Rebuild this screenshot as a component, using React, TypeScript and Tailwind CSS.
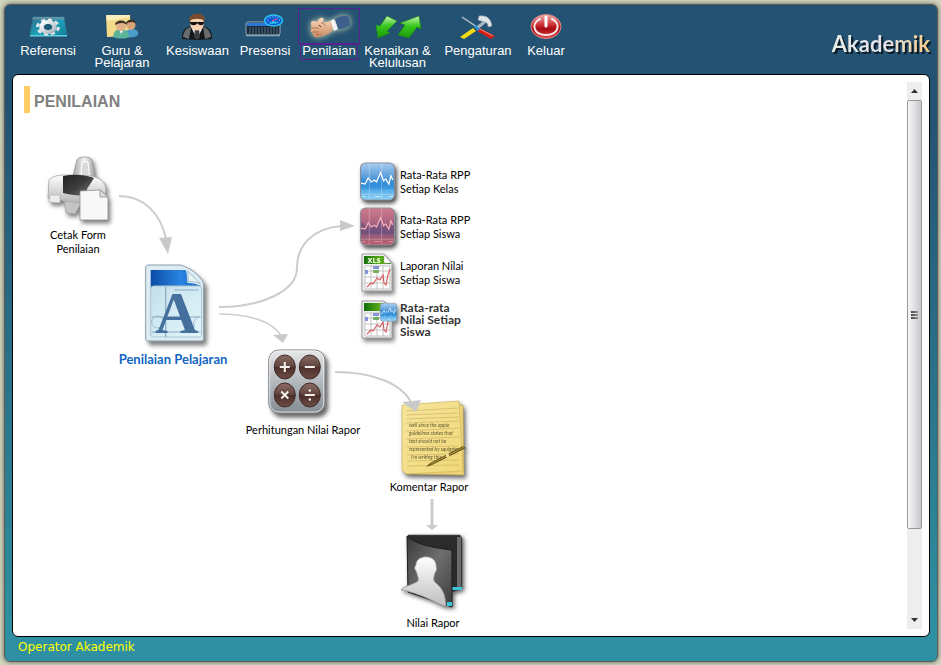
import type { ReactNode } from "react";

const labelFont = "font-['Lato','Open_Sans',sans-serif]";

function Defs() {
  return (
    <svg width="0" height="0" className="absolute" aria-hidden="true">
      <defs>
        <linearGradient id="teal" x1="0" y1="0" x2="1" y2="1">
          <stop offset="0" stopColor="#2f6d8c" />
          <stop offset="0.55" stopColor="#1f9fb8" />
          <stop offset="1" stopColor="#147d98" />
        </linearGradient>
        <linearGradient id="gear" x1="0" y1="0" x2="1" y2="1">
          <stop offset="0" stopColor="#ffffff" />
          <stop offset="1" stopColor="#a9b4ba" />
        </linearGradient>
        <linearGradient id="greenArrow" x1="0" y1="0" x2="0" y2="1">
          <stop offset="0" stopColor="#c8f5b4" />
          <stop offset="0.45" stopColor="#37c81c" />
          <stop offset="1" stopColor="#1c9a0c" />
        </linearGradient>
        <linearGradient id="power" x1="0" y1="0" x2="0" y2="1">
          <stop offset="0" stopColor="#f3b0b0" />
          <stop offset="0.45" stopColor="#c92a2e" />
          <stop offset="0.6" stopColor="#a50a10" />
          <stop offset="1" stopColor="#e84a4a" />
        </linearGradient>
        <linearGradient id="silver" x1="0" y1="0" x2="0" y2="1">
          <stop offset="0" stopColor="#ffffff" />
          <stop offset="1" stopColor="#b9b9b9" />
        </linearGradient>
        <linearGradient id="tray" x1="0" y1="0" x2="1" y2="0">
          <stop offset="0" stopColor="#a8a8a8" />
          <stop offset="0.5" stopColor="#f2f2f2" />
          <stop offset="1" stopColor="#9a9a9a" />
        </linearGradient>
        <linearGradient id="darkGlass" x1="0" y1="0" x2="1" y2="1">
          <stop offset="0" stopColor="#222222" />
          <stop offset="0.5" stopColor="#3c3c3c" />
          <stop offset="1" stopColor="#777777" />
        </linearGradient>
        <linearGradient id="docBlue" x1="0" y1="0" x2="1" y2="0">
          <stop offset="0" stopColor="#0c4ba6" />
          <stop offset="0.6" stopColor="#2a86e2" />
          <stop offset="1" stopColor="#1560bd" />
        </linearGradient>
        <linearGradient id="docGlass" x1="0" y1="0" x2="1" y2="1">
          <stop offset="0" stopColor="#c4dfeb" />
          <stop offset="1" stopColor="#e2f6fb" />
        </linearGradient>
        <linearGradient id="chartBlue" x1="0" y1="0" x2="0" y2="1">
          <stop offset="0" stopColor="#a9cdef" />
          <stop offset="0.42" stopColor="#4f97d8" />
          <stop offset="0.6" stopColor="#3b9be2" />
          <stop offset="1" stopColor="#8ed2f8" />
        </linearGradient>
        <linearGradient id="chartPink" x1="0" y1="0" x2="0" y2="1">
          <stop offset="0" stopColor="#d07c8c" />
          <stop offset="0.45" stopColor="#a5607f" />
          <stop offset="0.65" stopColor="#85587f" />
          <stop offset="1" stopColor="#c0616f" />
        </linearGradient>
        <linearGradient id="xlsGreen" x1="0" y1="0" x2="1" y2="0">
          <stop offset="0" stopColor="#0f6e0a" />
          <stop offset="0.6" stopColor="#5fae16" />
          <stop offset="1" stopColor="#2f8612" />
        </linearGradient>
        <linearGradient id="calcBody" x1="0" y1="0" x2="0" y2="1">
          <stop offset="0" stopColor="#e6e7e9" />
          <stop offset="0.5" stopColor="#b4b9bd" />
          <stop offset="1" stopColor="#858c92" />
        </linearGradient>
        <linearGradient id="calcKey" x1="0" y1="0" x2="0" y2="1">
          <stop offset="0" stopColor="#8c6c65" />
          <stop offset="0.48" stopColor="#60443e" />
          <stop offset="0.52" stopColor="#4b302b" />
          <stop offset="1" stopColor="#6f4c44" />
        </linearGradient>
        <linearGradient id="paper" x1="0" y1="0" x2="1" y2="1">
          <stop offset="0" stopColor="#f6e59b" />
          <stop offset="1" stopColor="#f0d878" />
        </linearGradient>
        <linearGradient id="folder" x1="0" y1="0" x2="1" y2="1">
          <stop offset="0" stopColor="#3a3a3a" />
          <stop offset="0.5" stopColor="#6e6e6e" />
          <stop offset="1" stopColor="#3c3c3c" />
        </linearGradient>
        <linearGradient id="person" x1="0" y1="0" x2="0" y2="1">
          <stop offset="0" stopColor="#ffffff" />
          <stop offset="1" stopColor="#bdbdbd" />
        </linearGradient>
        <linearGradient id="skin" x1="0" y1="0" x2="0" y2="1">
          <stop offset="0" stopColor="#fbd9bd" />
          <stop offset="1" stopColor="#c98a62" />
        </linearGradient>
      </defs>
    </svg>
  );
}

/* ---------- toolbar icons, all on a 60 x 34 grid ---------- */

function ToolSvg({ children }: { children: ReactNode }) {
  return (
    <svg width="60" height="34" viewBox="0 0 60 34" aria-hidden="true">
      {children}
    </svg>
  );
}

function GearIcon() {
  return (
    <ToolSvg>
      <path d="M15 8h31l3 19H12z" fill="url(#teal)" stroke="#2f7f9b" strokeWidth="0.6" />
      <path d="M15 8h31l.5 2.500H14.500z" fill="#7d99a8" opacity="0.7" />
      <path d="M12 26h37v1.500H12z" fill="#5ed0df" />
      <ellipse cx="30" cy="18" rx="10.500" ry="7" fill="none" stroke="#dfe5e8" strokeWidth="3" strokeDasharray="3.900 3" />
      <ellipse cx="30" cy="18" rx="6.500" ry="4.800" fill="none" stroke="url(#gear)" strokeWidth="4.500" />
      <ellipse cx="30" cy="18" rx="4" ry="3" fill="#1b5a75" />
    </ToolSvg>
  );
}

function TeacherIcon() {
  return (
    <ToolSvg>
      <path d="M14 6h24l1 21-24 1z" fill="#f2dc8b" />
      <path d="M14 6h24v2L15 12z" fill="#fbeebb" />
      <path d="M32 28c0-6 4-8 8-8s7 2 6 6c-2 2-6 3-14 2z" fill="#4a9ccb" />
      <ellipse cx="39" cy="16" rx="4.500" ry="5" fill="#d9a377" />
      <path d="M34 15c0-5 10-6 10 0-3-3-7-2-10 0z" fill="#3d2f28" />
      <path d="M21 28c1-7 4-8 8-8 5 0 8 3 8 8-4 2-12 2-16 0z" fill="#5cb59a" />
      <path d="M27 20l2 5 3-5z" fill="#f5f5f5" />
      <ellipse cx="29" cy="17" rx="5" ry="5" fill="#e2b088" />
      <path d="M23 16c0-6 12-6 12 0-4-3-8-2-12 0z" fill="#3c302a" />
    </ToolSvg>
  );
}

function AgentIcon() {
  return (
    <ToolSvg>
      <path d="M14 30c0-11 5-13 15-13s15 2 15 13c-9 1-21 1-30 0z" fill="#151719" />
      <path d="M15 28c1-7 4-9 8-10l-2 12zM43 28c-1-7-4-9-8-10l2 12z" fill="#6a6d70" />
      <path d="M23 18h12l-6 12z" fill="#e8e8ea" />
      <path d="M27 20h4l1 9h-6z" fill="#3a3c42" />
      <ellipse cx="29" cy="14" rx="7" ry="7.500" fill="#f5cfae" />
      <path d="M21 12c-1-9 17-10 16 0-4-3-12-3-16 0z" fill="#7a4b2c" />
      <path d="M22 13h14v1c-1 3-5 3-6.500 0C28 17 23 17 22 14z" fill="#111" />
    </ToolSvg>
  );
}

function PresenceIcon() {
  return (
    <ToolSvg>
      <rect x="11" y="13" width="34" height="13" rx="2" fill="#1a2b3c" stroke="#92aebf" />
      <path d="M12 14h32v3H12z" fill="#2a78d8" />
      <path d="M15 18v7M18 18v7M21 18v7M24 18v7M27 18v7M30 18v7M33 18v7M36 18v7M39 18v7M42 18v7" stroke="#536b7d" />
      <path d="M11 26.500h34" stroke="#86a9b8" strokeWidth="1.500" />
      <ellipse cx="38.500" cy="11.500" rx="9" ry="5.500" fill="#1659d3" stroke="#27c8ee" strokeWidth="1.500" />
      <ellipse cx="38.500" cy="11" rx="6" ry="3" fill="none" stroke="#7ae3ff" strokeDasharray="1 1.500" />
      <path d="M34 15l4-3 6 2z" fill="#25d3f5" />
      <path d="M37 12l5-2" stroke="#ff5577" />
    </ToolSvg>
  );
}

function HandIcon() {
  return (
    <ToolSvg>
      <g className="drop-shadow-[0_0_3px_rgba(235,240,190,0.9)]">
        <path d="M36 10c6-4 11-4 14-2l1 8c-3 2-7 5-12 4z" fill="#3d618c" />
        <path d="M35 10l4 10-4 2-4-10z" fill="#f3f5f7" />
        <path d="M12 14c0-3 4-2 6-1 2-3 3-5 6-4 2 2-1 4-1 5l9-2c1 4 2 7 2 9-4 4-9 6-15 7-4 1-6-2-5-4-3-1-3-3-1-5-1-2-1-3-1-5z" fill="url(#skin)" />
        <path d="M13 19h7M14 23h6M17 26l5-1M22 14c2 0 4 1 4 3" fill="none" stroke="#a8683f" strokeWidth="0.8" />
        <path d="M20 16l2 2" stroke="#4a2a18" />
      </g>
    </ToolSvg>
  );
}

function SwapIcon() {
  return (
    <ToolSvg>
      <path d="M19 7l10 5-10 10 3 2-12 5-2-13 4 1z" fill="url(#greenArrow)" stroke="#168a0c" strokeWidth="0.6" />
      <path d="M30 26l7-10-5-2 19-7 2 13-4-2-8 11z" fill="url(#greenArrow)" stroke="#168a0c" strokeWidth="0.6" />
    </ToolSvg>
  );
}

function ToolsIcon() {
  return (
    <ToolSvg>
      <path d="M14 8l18 12" stroke="#b8c4cc" strokeWidth="1.500" />
      <path d="M31 19l16 8-4 3-14-8z" fill="#d51f17" />
      <path d="M32 20l13 7" stroke="#ff8a74" />
      <path d="M29 19l10-8" stroke="#aab6be" strokeWidth="3" />
      <path d="M31 7c7-1 12 2 13 10l-4 1c0-4-2-5-4-5l-6-2z" fill="#dfe6ea" stroke="#8d9aa5" strokeWidth="0.600" />
      <path d="M25 19l3 3-12 8-4-2z" fill="#f3d914" />
      <path d="M27 17l4 4" stroke="#2b96e0" strokeWidth="2.500" />
    </ToolSvg>
  );
}

function PowerIcon() {
  return (
    <ToolSvg>
      <ellipse cx="30" cy="17.500" rx="15" ry="12" fill="url(#power)" stroke="#d88a8a" />
      <path d="M24 10c-10 5-6 16 6 16s16-11 6-16" fill="none" stroke="#fbeaea" strokeWidth="2" strokeLinecap="round" />
      <path d="M30 8v9" stroke="#ffffff" strokeWidth="3" strokeLinecap="round" />
    </ToolSvg>
  );
}

const tools = [
  { label: "Referensi", width: "w-[62px]", icon: <GearIcon /> },
  { label: "Guru & Pelajaran", width: "w-[86px] px-3", icon: <TeacherIcon /> },
  { label: "Kesiswaan", width: "w-[65px]", icon: <AgentIcon /> },
  { label: "Presensi", width: "w-[70px]", icon: <PresenceIcon /> },
  { label: "Penilaian", width: "w-[58px]", icon: <HandIcon />, active: true },
  { label: "Kenaikan & Kelulusan", width: "w-[79px]", icon: <SwapIcon /> },
  { label: "Pengaturan", width: "w-[82px]", icon: <ToolsIcon /> },
  { label: "Keluar", width: "w-[54px]", icon: <PowerIcon /> },
];

/* ---------- diagram icons ---------- */

function PrinterIcon() {
  return (
    <svg width="68" height="70" viewBox="0 0 68 70" className="ml-1 drop-shadow-[2px_3px_2px_rgba(0,0,0,0.5)]" aria-hidden="true">
      <path d="M27 22l4-16c1-4 14-4 15 0l4 22-21 4z" fill="url(#tray)" stroke="#999" strokeWidth="0.800" />
      <path d="M35 22l1-14h6l2 18z" fill="#d9d9d9" stroke="#fff" />
      <path d="M18 46l12-1 6 3-7 12-9-1z" fill="#c4c4c4" stroke="#999" strokeWidth="0.600" />
      <path d="M3 26c2-3 8-5 16-5l26 1c10 2 14 6 15 13l-1 12c-18 2-34 2-46-1L2 44z" fill="url(#silver)" stroke="#a3a3a3" strokeWidth="0.800" />
      <path d="M17 22c10-2 20-2 31 2l-7 11v6c-8 1-16 0-24-2z" fill="url(#darkGlass)" />
      <path d="M4 41h10v8l-11-1z" fill="#ededed" stroke="#aaa" strokeWidth="0.600" />
      <path d="M34 37l20-1 8 7v23H34z" fill="#f8f8f8" stroke="#8f8f8f" strokeWidth="0.800" />
      <path d="M54 36v7h8z" fill="#e0e0e0" stroke="#8f8f8f" strokeWidth="0.800" />
    </svg>
  );
}

function LetterDocIcon() {
  return (
    <svg width="62" height="84" viewBox="0 0 62 84" className="ml-1.5 drop-shadow-[3px_4px_2px_rgba(0,0,0,0.5)]" aria-hidden="true">
      <path d="M3 1h33c10 3 18 9 23 18v56c0 1-1 2-3 2H3c-1 0-2-1-2-3V3c0-1 1-2 2-2z" fill="#dcecf2" stroke="#8aa0ab" />
      <path d="M6 6h35c2 5 1 10 2 13 5 0 9 1 13 3v3H6z" fill="url(#docBlue)" />
      <path d="M43 7l13 13c-5-2-9-3-12-2z" fill="#e4f2f6" stroke="#7e9fb4" strokeWidth="0.600" />
      <rect x="6" y="22" width="51" height="51" rx="3" fill="url(#docGlass)" stroke="#abc6d2" />
      <path d="M7 53h49M21 23v50M7 68h49M30 26h24" stroke="#87a9c1" strokeWidth="1.200" fill="none" />
      <circle cx="13" cy="58" r="6" fill="none" stroke="#9cb9cc" />
      <path d="M55 53c-5 1-7 5-5 10" fill="none" stroke="#9cb9cc" />
      <text x="32" y="69" textAnchor="middle" fontFamily="Liberation Serif, serif" fontWeight="700" fontSize="60" fill="#456f9d">
        A
      </text>
    </svg>
  );
}

function ChartTile({ fill, line, area }: { fill: string; line: string; area: string }) {
  return (
    <>
      <rect x="0.500" y="0.500" width="33" height="36" rx="5" fill={fill} stroke="#8a8f9a" />
      <path d="M1 14c3 5 7 2 10 4l3-3 3 2 3-6 3 8 3-3 4 2 3-5v13H1z" fill={area} />
      <path d="M9 1v35M21 1v35M1 31h32" stroke="#ffffff" opacity="0.25" />
      <path d="M1 20l4 1 3-6 3 4 3-2 2 2 4-9 3 8 2-2 3 5 2-8 2 4" fill="none" stroke={line} strokeWidth="1.200" />
      <path d="M2 33h3M14 33h6M28 33h4" stroke={line} opacity="0.600" />
    </>
  );
}

function ChartIcon({ tone }: { tone: "blue" | "pink" }) {
  return (
    <svg width="35" height="40" viewBox="0 0 34 38" className="drop-shadow-[2px_3px_2px_rgba(0,0,0,0.7)]" aria-hidden="true">
      {tone === "blue" ? (
        <ChartTile fill="url(#chartBlue)" line="#ffffff" area="#1f7ccb55" />
      ) : (
        <ChartTile fill="url(#chartPink)" line="#f4b0b8" area="#54487d66" />
      )}
    </svg>
  );
}

function SheetIcon({ withChart = false }: { withChart?: boolean }) {
  return (
    <svg width="38" height="40" viewBox="0 0 38 40" className="drop-shadow-[2px_3px_2px_rgba(0,0,0,0.5)]" aria-hidden="true">
      <path d="M2 1h22l8 9v28H2z" fill="#f0f0f0" stroke="#9b9b9b" />
      <path d="M4 3h20v7h7v1H4z" fill="url(#xlsGreen)" />
      <path d="M24 2v8h7z" fill="#fff" stroke="#aaa" strokeWidth="0.500" />
      {!withChart && (
        <text x="14" y="10" textAnchor="middle" fontFamily="Open Sans, sans-serif" fontWeight="800" fontSize="7" fill="#e7f7d4">
          XLS
        </text>
      )}
      <rect x="5" y="13" width="25" height="23" fill="#fff" />
      <path d="M5 13v23M11 13v23M17 13v23M23 13v23M30 13v23M5 13h25M5 18h25M5 24h25M5 30h25M5 36h25" stroke="#b5b5b5" strokeWidth="0.800" />
      <path d="M13 13h6v3h-6zM5 17h3v4H5z" fill="#8593d6" />
      <path d="M13 17h6v3h-6z" fill="#6fb36b" />
      <path d="M7 34l4-4 2 1 4-6 3 2 3-5 1 8 2 2 2-10 2-6" fill="none" stroke="#d76060" strokeWidth="1.200" />
      {withChart && (
        <g transform="translate(20 3) scale(.5)">
          <ChartTile fill="url(#chartBlue)" line="#ffffff" area="#1f7ccb55" />
        </g>
      )}
    </svg>
  );
}

function CalculatorIcon() {
  return (
    <svg width="58" height="70" viewBox="0 0 58 70" className="mr-3 drop-shadow-[3px_4px_2px_rgba(0,0,0,0.6)]" aria-hidden="true">
      <rect x="1" y="1" width="56" height="63" rx="10" fill="url(#calcBody)" stroke="#7c8287" />
      <rect x="2" y="2" width="54" height="61" rx="9" fill="none" stroke="#f5f5f5" opacity="0.800" />
      <g fill="url(#calcKey)" stroke="#3e2a27">
        <ellipse cx="17" cy="18" rx="10.500" ry="12" />
        <ellipse cx="42" cy="18" rx="10.500" ry="12" />
        <ellipse cx="17" cy="46" rx="10.500" ry="12" />
        <ellipse cx="42" cy="46" rx="10.500" ry="12" />
      </g>
      <path d="M12 18h10M17 13v10M37 18h10M13.500 42.500l7 7M20.500 42.500l-7 7M37 46h10" stroke="#f5f0ec" strokeWidth="2" />
      <circle cx="42" cy="41.500" r="1.200" fill="#f5f0ec" />
      <circle cx="42" cy="50.500" r="1.200" fill="#f5f0ec" />
    </svg>
  );
}

function NotesIcon() {
  return (
    <svg width="68" height="76" viewBox="0 0 68 76" className="ml-3 drop-shadow-[2px_3px_2px_rgba(0,0,0,0.6)]" aria-hidden="true">
      <path d="M8 6l54-1 1 70-56-1z" fill="#ecd37a" stroke="#c4a850" strokeWidth="0.600" />
      <path d="M1 5l57-4 4 70-57 3-4-4z" fill="url(#paper)" stroke="#c9ac55" strokeWidth="0.600" />
      <path d="M5 11l52-3M5 15l52-2M5 19l53-2M5 23l53-2M5 31l53-3M5 39l53-2M6 47l52-1M6 55l52-1M6 61l52-1M6 66l52-1" stroke="#d0b565" strokeWidth="0.700" />
      <g fontFamily="Lato, sans-serif" fontStyle="italic" fontSize="5" fill="#675b30">
        <text x="8" y="27">well since the apple</text>
        <text x="8" y="35">guidelines states that</text>
        <text x="8" y="43">text should not be</text>
        <text x="8" y="51">represented by squiggles</text>
        <text x="10" y="59">I'm writing this</text>
      </g>
      <path d="M25 67l4-4 33-17 3 2-34 17z" fill="#6b5718" />
      <path d="M30 64l33-17" stroke="#b39a41" />
      <path d="M45 56l3-1" stroke="#f1e2a0" strokeWidth="3" />
    </svg>
  );
}

function FolderIcon() {
  return (
    <svg width="68" height="79" viewBox="0 0 68 79" className="drop-shadow-[2px_2px_2px_rgba(0,0,0,0.6)]" aria-hidden="true">
      <path d="M9 2h52l2 3v51l-10 3H9z" fill="#2b2b2b" stroke="#555" strokeWidth="0.600" />
      <path d="M58 4h4v50h-4z" fill="#6b6b6b" />
      <path d="M53 54h10v3H53z" fill="#39c6d8" />
      <path d="M8 3c8 8 26 12 45 14v57l-44-15z" fill="url(#folder)" stroke="#1c1c1c" />
      <path d="M48 69h5v4h-5z" fill="#39c6d8" />
      <path d="M2 57c2-4 12-5 17-9 1-3-1-6-2-10-3-4 0-5 0-7 1-9 18-10 20 0 0 3 2 5-1 9-1 3-2 7 0 9 6 5 11 11 11 25-12-5-26-14-45-17z" fill="url(#person)" stroke="#888" strokeWidth="0.700" />
    </svg>
  );
}

/* ---------- diagram nodes ---------- */

function StepNode({ place, icon, lines, strong = false }: { place: string; icon: ReactNode; lines: string[]; strong?: boolean }) {
  return (
    <a href="#" className={`absolute flex -translate-x-1/2 flex-col items-center text-center whitespace-nowrap ${labelFont} ${strong ? "text-[13px] font-bold text-[#1166c4]" : "text-[11px] text-black"} ${place}`}>
      {icon}
      <span className="mt-1 leading-[14px]">
        {lines.map((line) => (
          <span key={line} className="block">
            {line}
          </span>
        ))}
      </span>
    </a>
  );
}

function ReportNode({ place, icon, lines, bold = false }: { place: string; icon: ReactNode; lines: string[]; bold?: boolean }) {
  return (
    <a href="#" className={`absolute flex items-center whitespace-nowrap ${labelFont} ${bold ? "text-xs leading-[12px] font-bold text-[#333]" : "text-[11px] leading-[14px] text-black"} ${place}`}>
      <span className="flex w-10">{icon}</span>
      <span>
        {lines.map((line) => (
          <span key={line} className="block">
            {line}
          </span>
        ))}
      </span>
    </a>
  );
}

function Arrows() {
  return (
    <svg width="480" height="504" viewBox="24 125 480 504" className="pointer-events-none absolute top-0 left-0" aria-hidden="true">
      <g fill="none" stroke="#cccccc" strokeWidth="2">
        <path d="M119 196C144 196 161 214 166 239" />
        <path d="M219 307C264 307 297 290 297 268C297 246 312 228 342 226" />
        <path d="M219 314C250 314 274 322 281 336" strokeWidth="1.500" />
        <path d="M335 372C370 372 400 382 411 402" />
        <path d="M432 499V526" strokeWidth="3" />
      </g>
      <g fill="#c9c9c9">
        <path d="M159 238l13-1-4 17z" />
        <path d="M340 220l15 6-15 5z" />
        <path d="M273 335l15-1-5 9z" />
        <path d="M402 402l19-2-5 12z" />
        <path d="M426 525h12l-6 5z" />
      </g>
    </svg>
  );
}

function Diagram() {
  return (
    <div className="relative mt-3 h-[504px]">
      <StepNode place="left-[54px] top-[29px]" icon={<PrinterIcon />} lines={["Cetak Form", "Penilaian"]} />
      <StepNode strong place="left-[149px] top-[139px]" icon={<LetterDocIcon />} lines={["Penilaian Pelajaran"]} />
      <ReportNode place="left-[336px] top-[37px]" icon={<ChartIcon tone="blue" />} lines={["Rata-Rata RPP", "Setiap Kelas"]} />
      <ReportNode place="left-[336px] top-[82px]" icon={<ChartIcon tone="pink" />} lines={["Rata-Rata RPP", "Setiap Siswa"]} />
      <ReportNode place="left-[336px] top-[128px]" icon={<SheetIcon />} lines={["Laporan Nilai", "Setiap Siswa"]} />
      <ReportNode bold place="left-[336px] top-[175px]" icon={<SheetIcon withChart />} lines={["Rata-rata", "Nilai Setiap", "Siswa"]} />
      <StepNode place="left-[279px] top-[224px]" icon={<CalculatorIcon />} lines={["Perhitungan Nilai Rapor"]} />
      <StepNode place="left-[405px] top-[275px]" icon={<NotesIcon />} lines={["Komentar Rapor"]} />
      <StepNode place="left-[409px] top-[408px]" icon={<FolderIcon />} lines={["Nilai Rapor"]} />
      <Arrows />
    </div>
  );
}

function ScrollBar() {
  return (
    <div className="flex w-[15px] shrink-0 flex-col bg-[#eeeeee]">
      <button type="button" aria-label="Scroll up" className="flex h-[18px] items-center justify-center">
        <svg width="7" height="4" viewBox="0 0 7 4" aria-hidden="true">
          <path d="M0 4L3.500 0 7 4z" fill="#333" />
        </svg>
      </button>
      <div className="flex-1">
        <div className="flex h-[84%] flex-col items-center justify-center gap-px rounded-xs border border-[#999] bg-linear-to-r from-[#f6f6f6] via-[#e0e0e3] to-[#c6c7cc]">
          <span className="h-0.5 w-[7px] bg-linear-to-r from-[#444] to-[#999]" />
          <span className="h-0.5 w-[7px] bg-linear-to-r from-[#444] to-[#999]" />
          <span className="h-0.5 w-[7px] bg-linear-to-r from-[#444] to-[#999]" />
        </div>
      </div>
      <button type="button" aria-label="Scroll down" className="flex h-[18px] items-center justify-center">
        <svg width="7" height="4" viewBox="0 0 7 4" aria-hidden="true">
          <path d="M0 0h7L3.500 4z" fill="#333" />
        </svg>
      </button>
    </div>
  );
}

export default function App() {
  return (
    <div className="min-h-screen bg-[#d3d7bd] px-1 pt-1 pr-[3px] pb-[3px] font-['Liberation_Sans',Arial,sans-serif]">
      <Defs />
      <div className="rounded-md border border-[#5c5d52] bg-linear-to-b from-[#245272] from-15% to-[#2e90a2] to-95% shadow-[0_0_5px_#555]">
        <header className="flex h-[69px] justify-between pt-[3px]">
          <nav className="flex pl-3">
            {tools.map((tool) => (
              <a key={tool.label} href="#" className={`flex flex-col items-center text-center text-[13px] leading-[12px] text-white ${tool.width}`}>
                <span className={`flex h-9 w-[62px] shrink-0 border ${tool.active ? "border-[#5a2090]" : "border-transparent"}`}>{tool.icon}</span>
                <span className={`border pb-0.5 ${tool.active ? "border-[#5a2090] px-px" : "border-transparent"}`}>{tool.label}</span>
              </a>
            ))}
          </nav>
          <div className="mt-[22px] mr-[7px] bg-linear-to-r from-[#e6eee4] via-[#e3e3ee] to-[#f6cf85] bg-clip-text font-['Lato',sans-serif] text-[22px] leading-[27px] font-bold text-transparent drop-shadow-[2px_2px_0_#0b1c28]">
            Akademik
          </div>
        </header>
        <main className="mx-[7px] flex rounded-md border border-black bg-white py-[7px] pr-[7px]">
          <section className="min-w-0 flex-1 pt-1 pl-[11px]">
            <h1 className="border-l-[6px] border-[#ffcc66] pt-1 pl-1 text-base leading-[23px] font-bold text-[#808080]">PENILAIAN</h1>
            <Diagram />
          </section>
          <ScrollBar />
        </main>
        <footer className="h-6 pl-[13px] font-['DejaVu_Sans',Verdana,sans-serif] text-xs leading-[20px] text-[#ffff00]">Operator Akademik</footer>
      </div>
    </div>
  );
}
